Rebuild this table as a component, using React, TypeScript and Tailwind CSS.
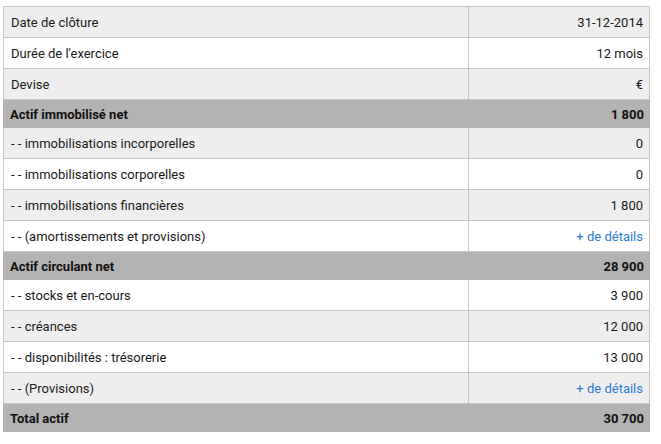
import React from "react";

type Row = { label: string; value: string; kind: "light" | "white" | "head"; link?: boolean };

const rows: Row[] = [
  { label: "Date de clôture", value: "31-12-2014", kind: "light" },
  { label: "Durée de l'exercice", value: "12 mois", kind: "white" },
  { label: "Devise", value: "€", kind: "light" },
  { label: "Actif immobilisé net", value: "1 800", kind: "head" },
  { label: "- - immobilisations incorporelles", value: "0", kind: "light" },
  { label: "- - immobilisations corporelles", value: "0", kind: "white" },
  { label: "- - immobilisations financières", value: "1 800", kind: "light" },
  { label: "- - (amortissements et provisions)", value: "+ de détails", kind: "white", link: true },
  { label: "Actif circulant net", value: "28 900", kind: "head" },
  { label: "- - stocks et en-cours", value: "3 900", kind: "white" },
  { label: "- - créances", value: "12 000", kind: "light" },
  { label: "- - disponibilités : trésorerie", value: "13 000", kind: "white" },
  { label: "- - (Provisions)", value: "+ de détails", kind: "light", link: true },
  { label: "Total actif", value: "30 700", kind: "head" },
];

export default function App() {
  return (
    <div className="w-[661px] h-[444px] bg-white pl-[3px] pt-[6px]" style={{ fontFamily: "Roboto, 'Liberation Sans', sans-serif" }}>
      <div className="w-[647px] flex flex-col border-t border-[#c6c6c6]">
        {rows.map((r, i) => {
          const head = r.kind === "head";
          const bg = head ? "bg-[#b3b3b3]" : r.kind === "light" ? "bg-[#eeeeee]" : "bg-white";
          return (
            <div
              key={i}
              className={`flex ${bg} ${head ? "h-[28px]" : "h-[31px] border-b border-[#c6c6c6] border-x"} text-[13px] pt-[2px] ${head ? "font-bold text-[#111]" : "text-[#1a1a1a]"}`}
            >
              <div className={`w-[465px] flex items-center pl-[7px] ${head ? "" : "border-r border-[#c6c6c6] -mt-[2px] pt-[2px]"}`}>
                {r.label}
              </div>
              <div className={`flex-1 flex items-center justify-end pr-[6px] ${r.link ? "text-[#2b7bd8]" : ""}`}>
                {r.value}
              </div>
            </div>
          );
        })}
      </div>
    </div>
  );
}
